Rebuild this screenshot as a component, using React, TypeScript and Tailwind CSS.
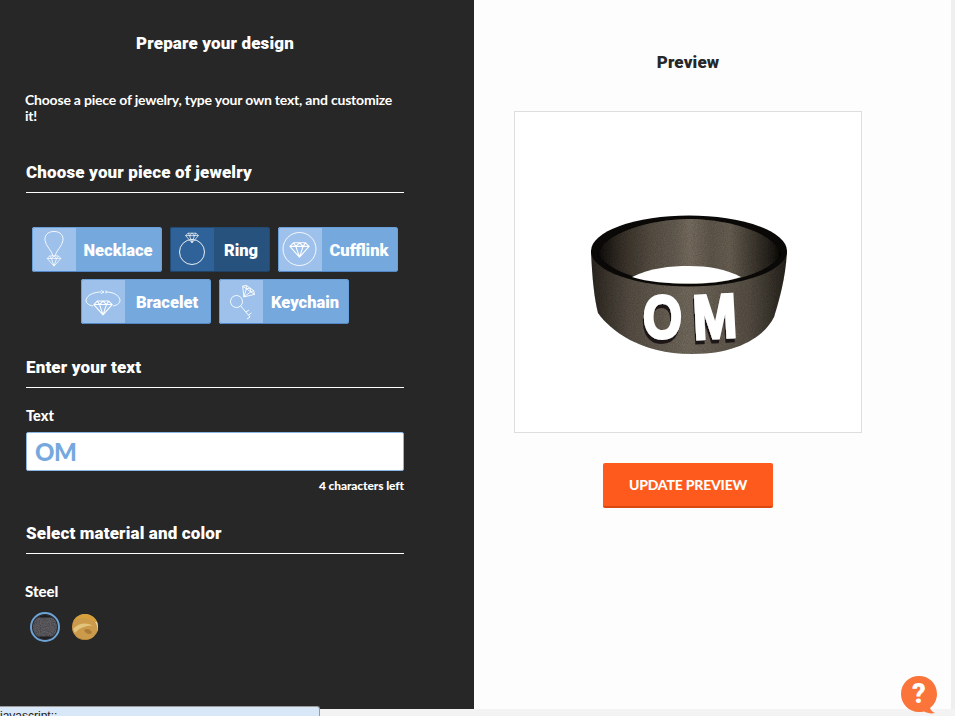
import type { ReactNode } from 'react'

const Gem = ({ x, y, s = 1 }: { x: number; y: number; s?: number }) => (
  <g transform={`translate(${x} ${y}) scale(${s})`}>
    <path d="M-8 -3 L-5 -6 H5 L8 -3 L0 6 Z M-8 -3 H8 M-3 -3 L0 6 L3 -3 M-5 -6 L-3 -3 L0 -6 L3 -3 L5 -6" />
  </g>
)

const iconProps = {
  viewBox: '0 0 44 45',
  className: 'size-full',
  fill: 'none',
  stroke: 'white',
  strokeWidth: 0.9,
  strokeLinejoin: 'round' as const
}

const NecklaceIcon = () => (
  <svg {...iconProps}>
    <path d="M22 4.500 C15 4.500 12.500 9 13 13.500 C13.800 19 20 24 21 29 M22 4.500 C29 4.500 31.500 9 31 13.500 C30.200 19 24 24 23 29" />
    <Gem x={22} y={34} s={0.85} />
  </svg>
)

const RingIcon = () => (
  <svg {...iconProps}>
    <circle cx="22" cy="25" r="12.500" />
    <Gem x={22} y={11} s={0.8} />
  </svg>
)

const CufflinkIcon = () => (
  <svg {...iconProps}>
    <circle cx="21.500" cy="22" r="16.500" />
    <Gem x={21.500} y={23} s={1.2} />
  </svg>
)

const BraceletIcon = () => (
  <svg {...iconProps}>
    <path d="M12 27 C7 26 5 24 5 21 C6 16 13 13 20 13 M25 13 C32 13 38 16 39 21 C39 24 37 26 32 27" />
    <path d="M20 11.500 L23 13 L20 14.500 M25 11.500 L25 14.500" />
    <Gem x={22} y={29} s={1.15} />
  </svg>
)

const KeychainIcon = () => (
  <svg {...iconProps}>
    <circle cx="17.500" cy="22.500" r="6" />
    <path d="M21.800 27 L31 38 M27 33 L30 31 M29.500 36 L32.500 34 M31 38 L28 40" />
    <g transform="rotate(35 28 13.500)">
      <Gem x={28} y={13.500} s={0.9} />
    </g>
  </svg>
)

function JewelryButton({ label, icon, width, active }: { label: string; icon: ReactNode; width: string; active?: boolean }) {
  return (
    <button
      className={`relative flex h-[45px] overflow-hidden rounded-[3px] ${width} ${active ? 'bg-[#27527e]' : 'bg-[#75a9de]'}`}
    >
      <span className={`block h-[45px] w-[44px] shrink-0 ${active ? 'bg-[#2e6299]' : 'bg-[#9dc1ea]'}`}>{icon}</span>
      <span className="flex h-[45px] flex-1 items-center justify-center pt-[3px] pr-[2px] font-['Roboto',sans-serif] text-[16.5px] font-black text-white">
        {label}
      </span>
      <span
        className={`absolute inset-0 rounded-[3px] border ${
          active ? 'border-[#234a72] border-b-[#1f4266]' : 'border-[#6aa0da] border-b-[#5288c8]'
        }`}
      />
    </button>
  )
}

function SectionHeading({ children }: { children: ReactNode }) {
  return (
    <h2 className="h-[31px] border-b border-white font-['Roboto',sans-serif] text-[17px] leading-[20px] font-black tracking-[0.14px] text-white">
      {children}
    </h2>
  )
}

function RingPreview() {
  return (
    <svg viewBox="563 200 250 170" className="h-[170px] w-[250px]">
      <defs>
        <linearGradient id="inner" x1="0" x2="1" y1="0" y2="0">
          <stop offset="0" stopColor="#14120f" />
          <stop offset="0.12" stopColor="#3a342c" />
          <stop offset="0.3" stopColor="#5f574b" />
          <stop offset="0.42" stopColor="#6d6458" />
          <stop offset="0.5" stopColor="#7f7567" />
          <stop offset="0.62" stopColor="#675e52" />
          <stop offset="0.72" stopColor="#70675a" />
          <stop offset="0.85" stopColor="#453f36" />
          <stop offset="0.93" stopColor="#2c2822" />
          <stop offset="1" stopColor="#0f0e0c" />
        </linearGradient>
        <linearGradient id="outer" x1="0" x2="1" y1="0" y2="0">
          <stop offset="0" stopColor="#2f2a24" />
          <stop offset="0.2" stopColor="#5d554a" />
          <stop offset="0.5" stopColor="#7a7164" />
          <stop offset="0.8" stopColor="#5e564b" />
          <stop offset="1" stopColor="#2a2620" />
        </linearGradient>
        <filter id="grain" x="0" y="0" width="100%" height="100%">
          <feTurbulence type="fractalNoise" baseFrequency="0.9" numOctaves="2" seed="3" />
          <feColorMatrix values="0 0 0 0 0  0 0 0 0 0  0 0 0 0 0  0.5 0 0 0 0" />
          <feComposite in2="SourceGraphic" operator="in" />
          <feMerge>
            <feMergeNode in="SourceGraphic" />
            <feMergeNode />
          </feMerge>
        </filter>
        <filter id="cut" x="-20%" y="-20%" width="140%" height="140%">
          <feDropShadow dx="-1" dy="4" stdDeviation="0" floodColor="#1c1915" />
        </filter>
      </defs>
      {/* outer band */}
      <path
        d="M591 250 C592 275 594 298 598 313 C610 330 640 354 692 354 C740 354 765 335 774 317 C780 298 786 275 787 250 Z"
        fill="url(#outer)"
        filter="url(#grain)"
      />
      {/* top rim and inner wall */}
      <ellipse cx="689" cy="251" rx="98" ry="35.500" fill="#0a0908" />
      <path
        d="M598 254 C602 234 650 219 689 219 C730 219 776 234 781 254 C772 272 730 284 689 284 C648 284 608 272 598 254 Z"
        fill="url(#inner)"
        filter="url(#grain)"
      />
      {/* see-through gap */}
      <path d="M632 277 C650 268 670 266 689 266 C708 266 726 269 741 277 C725 282 708 283.500 689 283.500 C668 283.500 648 282 632 277 Z" fill="#fff" />
      {/* cut-out letters */}
      <g fontFamily="'Liberation Sans', sans-serif" fontWeight="700" fontSize="62" fill="#fff" stroke="#fff" strokeWidth="3" filter="url(#cut)">
        <text x="643" y="338" textLength="39" lengthAdjust="spacingAndGlyphs">O</text>
        <text x="693" y="338" textLength="44" lengthAdjust="spacingAndGlyphs" transform="rotate(-3 714 320)">M</text>
      </g>
    </svg>
  )
}

function SteelSwatch() {
  return (
    <span className="block size-[30px] rounded-full border-2 border-[#6ea3d8] p-px">
      <svg viewBox="0 0 24 24" className="size-full rounded-full">
        <filter id="steel" x="0" y="0" width="100%" height="100%">
          <feTurbulence type="fractalNoise" baseFrequency="0.8" numOctaves="2" seed="5" />
          <feColorMatrix values="0 0 0 0 0.4  0 0 0 0 0.4  0 0 0 0 0.42  0.35 0 0 0 0" />
          <feComposite in2="SourceGraphic" operator="in" />
          <feMerge>
            <feMergeNode in="SourceGraphic" />
            <feMergeNode />
          </feMerge>
        </filter>
        <rect width="24" height="24" fill="#2e2c31" filter="url(#steel)" />
        <rect width="24" height="2.500" fill="#1d1c1f" />
        <rect y="21.500" width="24" height="2.500" fill="#1d1c1f" />
      </svg>
    </span>
  )
}

function GoldSwatch() {
  return (
    <svg viewBox="0 0 26 26" className="size-[26px] rounded-full">
      <rect width="26" height="26" fill="#cb9a4a" />
      <path d="M0 8 C6 3 14 3 26 9 L26 0 L0 0 Z" fill="#d89f3d" />
      <path d="M1 15 C7 9 14 8 21 12 C16 11 8 13 3 19 Z" fill="#e3c47d" />
      <path d="M12 16 C15 14 19 15 20 19 C17 21 14 20 12 16 Z" fill="#ab7c38" />
      <path d="M23 8 C26 11 26 18 23 23 L26 26 L26 8 Z" fill="#e6d7b4" />
      <path d="M0 20 C6 25 14 27 22 24 L22 26 L0 26 Z" fill="#b07c30" />
    </svg>
  )
}

export default function App() {
  return (
    <div className="relative flex h-[716px] w-[955px] flex-col overflow-hidden bg-[#f3f3f3] font-['Lato',sans-serif]">
      <div className="flex h-[709px]">
        <aside className="w-[474px] shrink-0 bg-[#272727] pr-[70px] pl-[26px] text-white">
          <h1 className="mt-[33px] text-center font-['Roboto',sans-serif] text-[17px] leading-[20px] font-black tracking-[0.14px]">
            Prepare your design
          </h1>
          <p className="mt-[39px] -ml-px text-sm leading-[16px] font-bold tracking-[-0.2px]">
            Choose a piece of jewelry, type your own text, and customize it!
          </p>
          <div className="mt-[38px]">
            <SectionHeading>Choose your piece of jewelry</SectionHeading>
          </div>
          <div className="mt-[34px] flex flex-wrap justify-center gap-x-2 gap-y-[7px]">
            <JewelryButton label="Necklace" icon={<NecklaceIcon />} width="w-[130px]" />
            <JewelryButton label="Ring" icon={<RingIcon />} width="w-[100px]" active />
            <JewelryButton label="Cufflink" icon={<CufflinkIcon />} width="w-[120px]" />
            <JewelryButton label="Bracelet" icon={<BraceletIcon />} width="w-[130px]" />
            <JewelryButton label="Keychain" icon={<KeychainIcon />} width="w-[130px]" />
          </div>
          <div className="mt-[33px]">
            <SectionHeading>Enter your text</SectionHeading>
          </div>
          <label className="mt-[19px] block text-[14.5px] leading-[18px] font-black">Text</label>
          <div className="mt-[7px] flex h-[39px] items-center rounded-[2px] border border-[#8ab6e6] bg-white px-2 pt-px text-[24px] font-black tracking-[-0.5px] text-[#75a9de]">
            OM
          </div>
          <p className="mt-[8px] text-right text-xs leading-[14px] font-black tracking-[-0.1px]">4 characters left</p>
          <div className="mt-[30px]">
            <SectionHeading>Select material and color</SectionHeading>
          </div>
          <p className="mt-[28px] -ml-px text-[15px] leading-[18px] font-black">Steel</p>
          <div className="mt-[12px] flex items-center gap-[12px] pl-[4px]">
            <SteelSwatch />
            <GoldSwatch />
          </div>
        </aside>
        <main className="flex flex-1 flex-col items-center bg-[#fdfdfd] pr-[49px]">
          <h2 className="mt-[52px] font-['Roboto',sans-serif] text-[17px] leading-[20px] font-black tracking-[0.14px] text-[#272727]">Preview</h2>
          <div className="mt-[39px] flex h-[322px] w-[348px] shrink-0 items-start justify-center border border-[#dedede] bg-white pt-[88px]">
            <RingPreview />
          </div>
          <button className="mt-[30px] h-[45px] w-[170px] rounded-[2px] border-b-2 border-[#d9490f] bg-[#fe5a1d] text-sm font-black tracking-[-0.2px] text-white uppercase">
            Update preview
          </button>
        </main>
        <div className="w-[4px] shrink-0 bg-[#efefef]" />
      </div>

      {/* help bubble */}
      <svg viewBox="0 0 40 44" className="absolute top-[675px] left-[900px] h-[44px] w-[40px]">
        <path d="M19 1 C29 1 37 8.500 37 19 C37 25 34 30 30 33 C31 36 33 37 35 38 C31 39 27 38 24 36.500 C22 37 20.500 37 19 37 C9 37 1 29 1 19 C1 8.500 9 1 19 1 Z" fill="#fb7439" />
        <text x="19" y="28" textAnchor="middle" fill="white" fontFamily="'Roboto', sans-serif" fontWeight="900" fontSize="27">?</text>
      </svg>

      {/* browser status tooltip */}
      <div className="absolute top-[706px] left-0 h-[10px] w-[320px] rounded-tr-[3px] border-t border-r border-[#9a9a9a] bg-[#d9e8f9] font-['Liberation_Sans',sans-serif] text-xs leading-[18px] text-[#222]">
        javascript:;
      </div>
    </div>
  )
}
